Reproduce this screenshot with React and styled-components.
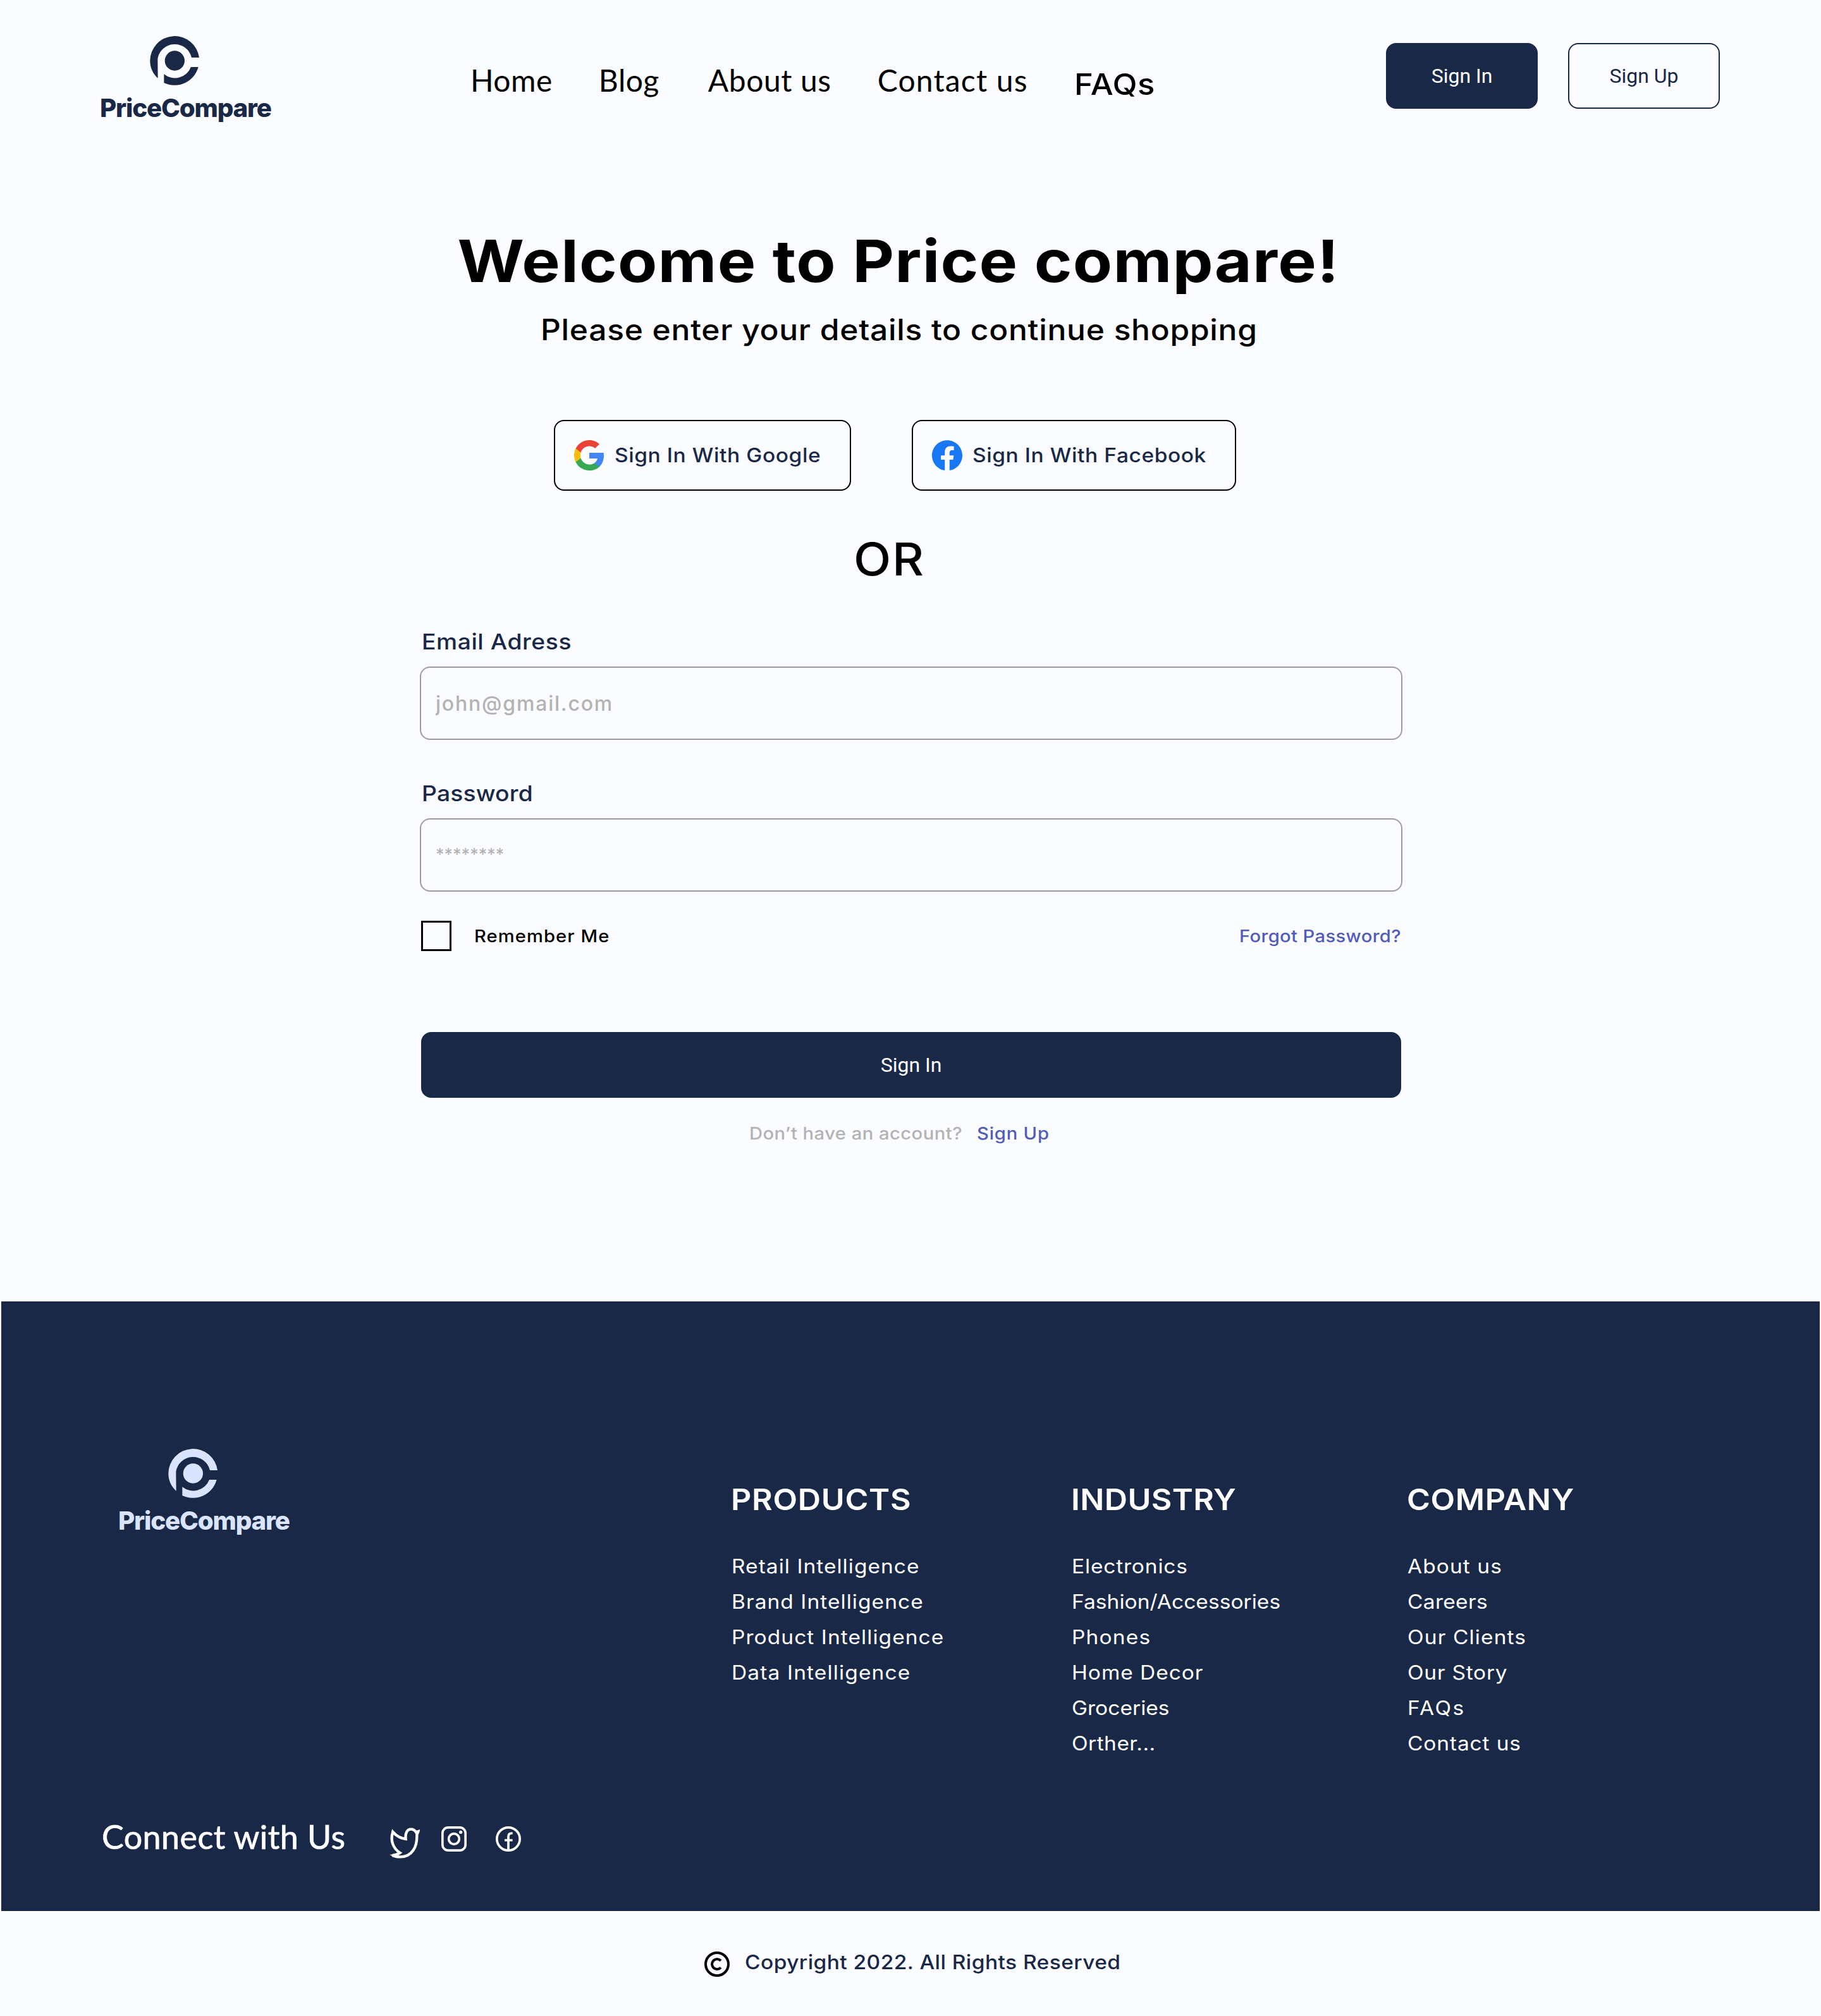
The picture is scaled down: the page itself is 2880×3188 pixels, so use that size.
import React from "react";
import styled, { createGlobalStyle } from "styled-components";

const navy = "#192847";
const paper = "#fbfcff";
const sans = `Inter, "Open Sans", sans-serif`;
const round = `Lato, "Open Sans", sans-serif`;

const GlobalStyle = createGlobalStyle`
  *, *::before, *::after { box-sizing: border-box; }
  body { margin: 0; background: ${paper}; font-family: ${sans}; }
  h1, h2, p, ul { margin: 0; padding: 0; }
  ul { list-style: none; }
  a { color: inherit; text-decoration: none; }
  svg { display: block; flex: none; }
`;

const Page = styled.div`
  display: flex;
  flex-direction: column;
  width: 2880px;
  height: 3188px;
  background: ${paper};
  overflow: hidden;
  white-space: nowrap;
`;

const Wide = styled.span`
  display: inline-block;
  transform: scaleX(${(p) => p.$stretch || 1.08});
  transform-origin: ${(p) => p.$origin || "left"} center;
`;

const Header = styled.header`
  display: flex;
  align-items: flex-start;
  height: 354px;
  padding: 0 160px 0 158px;
`;

const HeaderBrand = styled.div`
  flex: 0 0 586px;
  padding-top: 57px;
`;

const Brand = styled.div`
  display: inline-flex;
  flex-direction: column;
  color: ${(p) => p.$color};
`;

const BrandMark = styled.svg`
  width: 78px;
  height: 78px;
  margin-left: 79px;
  fill: currentColor;
`;

const BrandName = styled.span`
  margin-top: 12px;
  font-size: 40.3px;
  font-weight: 800;
  line-height: 48px;
  letter-spacing: -1.2px;
`;

const Nav = styled.nav`
  display: flex;
  gap: 73px;
  padding-top: 97px;
`;

const NavLink = styled.a`
  font-family: ${round};
  font-size: 48px;
  line-height: 60px;
  letter-spacing: ${(p) => p.$spacing}px;
  color: #000;
  &:nth-child(2) { margin-right: 4px; }
`;

const FaqLink = styled(NavLink)`
  margin-top: 6px;
  font-family: ${sans};
  font-size: 47px;
  font-weight: 500;
`;

const Actions = styled.div`
  display: flex;
  gap: 48px;
  margin-left: auto;
  padding-top: 68px;
`;

const Button = styled.button`
  display: flex;
  align-items: center;
  justify-content: center;
  width: ${(p) => p.$width}px;
  height: 104px;
  padding: 0 0 1px;
  border: 2px solid ${navy};
  border-radius: 16px;
  background: ${(p) => (p.$outline ? "transparent" : navy)};
  color: ${(p) => (p.$outline ? navy : "#fff")};
  font: 400 32px/40px Roboto, sans-serif;
`;

const Main = styled.main`
  display: flex;
  flex-direction: column;
  height: 1704px;
`;

const Intro = styled.div`
  display: flex;
  flex-direction: column;
  gap: 22px;
  width: 2843px;
  text-align: center;
  color: #000;
`;

const Title = styled.h1`
  font-size: 92.5px;
  font-weight: 700;
  line-height: 116px;
  letter-spacing: 1.1px;
`;

const Subtitle = styled.p`
  font-size: 46px;
  font-weight: 500;
  line-height: 58px;
  letter-spacing: 0.68px;
`;

const Providers = styled.div`
  display: flex;
  gap: 96px;
  margin: 114px 0 0 876px;
`;

const ProviderButton = styled.button`
  display: flex;
  align-items: center;
  gap: 16px;
  width: ${(p) => p.$width}px;
  height: 112px;
  padding: 0 0 0 30px;
  border: 2px solid #000;
  border-radius: 16px;
  background: transparent;
  color: ${navy};
  font: 500 31px/40px ${sans};
  letter-spacing: 0.55px;
`;

const Divider = styled.p`
  margin: 64px 0 0 1350px;
  font-size: 71.5px;
  font-weight: 500;
  line-height: 88px;
  letter-spacing: 1.6px;
  color: #000;
`;

const Form = styled.form`
  display: flex;
  flex-direction: column;
  width: 1554px;
  margin: 65px 0 0 664px;
`;

const Field = styled.label`
  display: flex;
  flex-direction: column;
  gap: 17px;
  margin-bottom: ${(p) => p.$after}px;
`;

const FieldName = styled.span`
  padding-left: 3px;
  font-size: 34.5px;
  font-weight: 500;
  line-height: 44px;
  letter-spacing: ${(p) => p.$spacing}px;
  color: ${navy};
`;

const Input = styled.input`
  height: 116px;
  padding: 0 23px ${(p) => (p.$masked ? 4 : 0)}px;
  border: 2px solid #9d9d9d;
  border-radius: 16px;
  background: transparent;
  font-family: ${sans};
  font-size: ${(p) => (p.$masked ? 26 : 32)}px;
  font-weight: 500;
  letter-spacing: ${(p) => (p.$masked ? 0 : 1.8)}px;
  &::placeholder { color: #b3b3b3; opacity: 1; }
`;

const Options = styled.div`
  display: flex;
  align-items: center;
  justify-content: space-between;
  padding: 0 2px;
  font-size: 27px;
  font-weight: 500;
`;

const Remember = styled.label`
  display: flex;
  align-items: center;
  gap: 36px;
  letter-spacing: 1px;
  color: #000;
`;

const Checkbox = styled.input.attrs({ type: "checkbox" })`
  appearance: none;
  width: 48px;
  height: 48px;
  margin: 0;
  border: 3px solid #000;
`;

const TextLink = styled.a`
  letter-spacing: ${(p) => p.$spacing}px;
  color: #515bb9;
`;

const Submit = styled(Button)`
  margin: 128px 0 0 2px;
`;

const Account = styled.p`
  display: flex;
  gap: 48px;
  margin: 40px 0 0 521px;
  font-size: 27px;
  font-weight: 500;
  line-height: 34px;
  letter-spacing: 0.44px;
  color: #b3b3b3;
`;

const Footer = styled.footer`
  display: flex;
  flex-direction: column;
  height: 964px;
  margin: 0 2px;
  background: ${navy};
  color: #fff;
  box-shadow: 0 0 0 2px #fff;
`;

const FooterTop = styled.div`
  display: flex;
  height: 812px;
`;

const FooterBrand = styled.div`
  flex: 0 0 1154px;
  padding: 233px 0 0 185px;
`;

const Columns = styled.div`
  display: grid;
  grid-template-columns: 538px 531px 400px;
  padding-top: 284px;
`;

const ColumnTitle = styled.h2`
  margin-bottom: 49px;
  font-size: 46.5px;
  font-weight: 600;
  line-height: 58px;
  letter-spacing: ${(p) => p.$spacing}px;
`;

const ColumnLink = styled.a`
  display: block;
  padding-left: 1px;
  font-size: 31px;
  line-height: 56px;
  letter-spacing: ${(p) => p.$spacing}px;
`;

const Connect = styled.div`
  display: flex;
  align-items: flex-start;
  padding-left: 159px;
`;

const ConnectTitle = styled.h2`
  width: 455px;
  padding-top: 2px;
  font: 400 52px/64px ${round};
  letter-spacing: 0.45px;
  -webkit-text-stroke: 0.7px currentColor;
`;

const SocialLink = styled.a`
  margin: ${(p) => p.$top}px ${(p) => p.$after}px 0 0;
`;

const Legal = styled.div`
  display: flex;
  align-items: flex-start;
  gap: 24px;
  padding: 60px 0 0 1114px;
`;

const LegalIcon = styled.svg`
  width: 40px;
  height: 40px;
  margin-top: 4px;
`;

const LegalText = styled.p`
  margin-top: 1px;
  font-size: 31px;
  font-weight: 500;
  line-height: 40px;
  letter-spacing: 0.41px;
  color: ${navy};
`;

const columns = [
  {
    title: "PRODUCTS",
    spacing: 0.64,
    links: [["Retail Intelligence", 0.96], ["Brand Intelligence", 0.98], ["Product Intelligence", 0.99], ["Data Intelligence", 1.06]],
  },
  {
    title: "INDUSTRY",
    spacing: 0.34,
    links: [["Electronics", 0.77], ["Fashion/Accessories", 0.05], ["Phones", 1.1], ["Home Decor", 0.9], ["Groceries", 0.04], ["Orther...", 0.44]],
  },
  {
    title: "COMPANY",
    spacing: 0.55,
    links: [["About us", 1], ["Careers", 0.3], ["Our Clients", 1.05], ["Our Story", 0.7], ["FAQs", 2.2], ["Contact us", 0.8]],
  },
];

function Logo({ color }) {
  return (
    <Brand $color={color}>
      <BrandMark viewBox="321 81 234 234">
        <circle cx="439" cy="198" r="47" />
        <path d="M555 183A117 117 0 0 0 322 198C322 232 336 261 359 281L358 190A82 82 0 0 1 519 183Z" />
        <path d="M516 228H551A117 117 0 0 1 388 303V262A82 82 0 0 0 516 228Z" />
      </BrandMark>
      <BrandName>PriceCompare</BrandName>
    </Brand>
  );
}

function GoogleIcon() {
  return (
    <svg width="48" height="48" viewBox="0 0 24 24">
      <path fill="#4285F4" d="M23.49 12.27c0-.79-.07-1.54-.19-2.27H12v4.51h6.47c-.29 1.48-1.14 2.73-2.4 3.58v3h3.86c2.26-2.09 3.56-5.17 3.56-8.82z" />
      <path fill="#34A853" d="M12 24c3.24 0 5.95-1.08 7.93-2.91l-3.86-3c-1.08.72-2.45 1.16-4.07 1.16-3.13 0-5.78-2.11-6.73-4.96H1.29v3.09C3.26 21.3 7.31 24 12 24z" />
      <path fill="#FBBC05" d="M5.27 14.29c-.25-.72-.38-1.49-.38-2.29s.14-1.57.38-2.29V6.62H1.29C.47 8.24 0 10.06 0 12s.47 3.76 1.29 5.38l3.98-3.09z" />
      <path fill="#EA4335" d="M12 4.75c1.77 0 3.35.61 4.6 1.8l3.42-3.42C17.95 1.19 15.24 0 12 0 7.31 0 3.26 2.7 1.29 6.62l3.98 3.09C6.22 6.86 8.87 4.75 12 4.75z" />
    </svg>
  );
}

function FacebookIcon() {
  return (
    <svg width="48" height="48" viewBox="0 0 24 24">
      <path
        fill="#1877F2"
        d="M24 12.073c0-6.627-5.373-12-12-12s-12 5.373-12 12c0 5.99 4.388 10.954 10.125 11.854v-8.385H7.078v-3.47h3.047V9.43c0-3.007 1.792-4.669 4.533-4.669 1.312 0 2.686.235 2.686.235v2.953H15.83c-1.491 0-1.956.925-1.956 1.874v2.25h3.328l-.532 3.47h-2.796v8.385C19.612 23.027 24 18.062 24 12.073z"
      />
    </svg>
  );
}

export default function App() {
  return (
    <Page>
      <GlobalStyle />
      <Header>
        <HeaderBrand>
          <Logo color={navy} />
        </HeaderBrand>
        <Nav>
          <NavLink $spacing={0.47}>Home</NavLink>
          <NavLink $spacing={0.51}>Blog</NavLink>
          <NavLink $spacing={0.57}>About us</NavLink>
          <NavLink $spacing={1.17}>Contact us</NavLink>
          <FaqLink $spacing={0.45}>
            <Wide>FAQs</Wide>
          </FaqLink>
        </Nav>
        <Actions>
          <Button $width={240}>Sign In</Button>
          <Button $width={240} $outline>Sign Up</Button>
        </Actions>
      </Header>

      <Main>
        <Intro>
          <Title>
            <Wide $stretch={1.1} $origin="center">Welcome to Price compare!</Wide>
          </Title>
          <Subtitle>
            <Wide $origin="center">Please enter your details to continue shopping</Wide>
          </Subtitle>
        </Intro>
        <Providers>
          <ProviderButton $width={470}>
            <GoogleIcon />
            <Wide>Sign In With Google</Wide>
          </ProviderButton>
          <ProviderButton $width={513}>
            <FacebookIcon />
            <Wide>Sign In With Facebook</Wide>
          </ProviderButton>
        </Providers>
        <Divider>
          <Wide>OR</Wide>
        </Divider>
        <Form>
          <Field $after={63}>
            <FieldName $spacing={0.52}>
              <Wide>Email Adress</Wide>
            </FieldName>
            <Input placeholder="john@gmail.com" />
          </Field>
          <Field $after={46}>
            <FieldName $spacing={0.15}>
              <Wide>Password</Wide>
            </FieldName>
            <Input $masked placeholder="********" />
          </Field>
          <Options>
            <Remember>
              <Checkbox />
              <Wide>Remember Me</Wide>
            </Remember>
            <TextLink $spacing={0.35}>
              <Wide $origin="right">Forgot Password?</Wide>
            </TextLink>
          </Options>
          <Submit type="button" $width={1550}>Sign In</Submit>
          <Account>
            <Wide>Don’t have an account?</Wide>
            <TextLink $spacing={0.74}>
              <Wide>Sign Up</Wide>
            </TextLink>
          </Account>
        </Form>
      </Main>

      <Footer>
        <FooterTop>
          <FooterBrand>
            <Logo color="#dae4ff" />
          </FooterBrand>
          <Columns>
            {columns.map((column) => (
              <div key={column.title}>
                <ColumnTitle $spacing={column.spacing}>
                  <Wide>{column.title}</Wide>
                </ColumnTitle>
                <ul>
                  {column.links.map(([label, spacing]) => (
                    <li key={label}>
                      <ColumnLink $spacing={spacing}>
                        <Wide>{label}</Wide>
                      </ColumnLink>
                    </li>
                  ))}
                </ul>
              </div>
            ))}
          </Columns>
        </FooterTop>
        <Connect>
          <ConnectTitle>Connect with Us</ConnectTitle>
          <SocialLink $top={20} $after={34}>
            <svg width="48" height="49" viewBox="48 58 144 147" fill="none" stroke="#fff" strokeWidth="13" strokeMiterlimit="3">
              <path d="M64 79C80 97 100 109 125 112C122 84 132 66 150 66C162 66 168 70 174 80L184 77L178 92C180 150 155 197 100 197C84 197 70 194 62 190C78 188 90 184 98 178C66 158 50 120 64 79Z" />
              <path d="M60 64L58 82L72 84ZM192 67L172 76L182 90ZM48 187L66 195L104 180L92 172C80 182 66 186 48 187Z" fill="#fff" stroke="none" />
            </svg>
          </SocialLink>
          <SocialLink $top={18} $after={46}>
            <svg width="40" height="40" viewBox="294 54 120 120" fill="none" stroke="#fff" strokeWidth="11">
              <rect x="299.5" y="59.5" width="109" height="109" rx="27" />
              <circle cx="354" cy="114" r="25" />
              <circle cx="386" cy="82" r="8" fill="#fff" stroke="none" />
            </svg>
          </SocialLink>
          <SocialLink $top={18} $after={0}>
            <svg width="40" height="40" viewBox="552 54 120 120" fill="none" stroke="#fff" strokeWidth="11">
              <circle cx="612" cy="114" r="54.5" />
              <path d="M612 168V103C612 92 618 87 628 87H632M594 120H632" />
            </svg>
          </SocialLink>
        </Connect>
      </Footer>

      <Legal>
        <LegalIcon viewBox="0 0 120 120" fill="none" stroke="#000" strokeWidth="12">
          <circle cx="60" cy="60" r="54" />
          <path d="M78 44A24 24 0 1 0 78 76" />
        </LegalIcon>
        <LegalText>
          <Wide>Copyright 2022. All Rights Reserved</Wide>
        </LegalText>
      </Legal>
    </Page>
  );
}
